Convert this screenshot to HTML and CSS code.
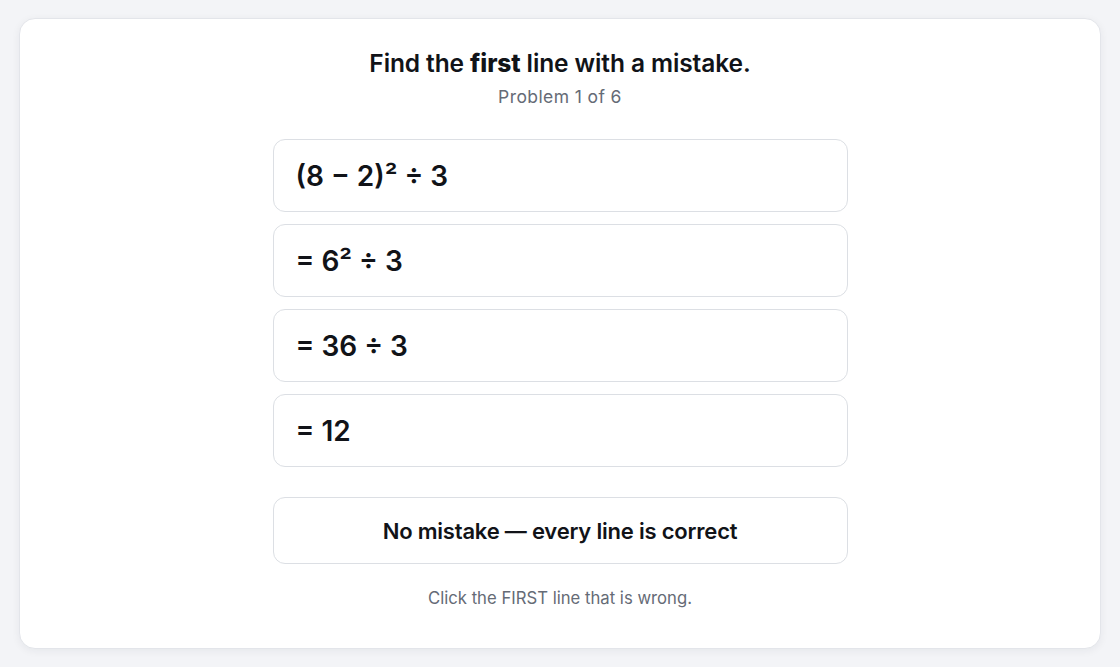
FILE: index.html
```html
<!DOCTYPE html>
<html>
<head>
<meta charset="utf-8">
<link rel="stylesheet" href="styles.css">
</head>
<body>
<div class="card">
  <h1 class="title">Find the <strong>first</strong> line with a mistake.</h1>
  <div class="sub">Problem 1 of 6</div>
  <div class="lines">
    <button class="line">(8 − 2)² ÷ 3</button>
    <button class="line">= 6² ÷ 3</button>
    <button class="line">= 36 ÷ 3</button>
    <button class="line">= 12</button>
  </div>
  <button class="nomistake">No mistake — every line is correct</button>
  <div class="hint">Click the FIRST line that is wrong.</div>
</div>
</body>
</html>
```
FILE: styles.css
```css
html, body { margin: 0; padding: 0; }
body {
  background: #f3f4f7;
  font-family: Inter, "Noto Sans", sans-serif;
  color: #111318;
  padding: 18px 19px;
  box-sizing: border-box;
  height: 667px;
}
.card {
  background: #fff;
  border: 1px solid #e3e5ea;
  border-radius: 16px;
  box-shadow: 0 2px 8px rgba(20, 30, 50, 0.06);
  height: 631px;
  box-sizing: border-box;
  padding: 28px 0 0;
  display: flex;
  flex-direction: column;
  align-items: center;
}
.title {
  margin: 0;
  font-size: 24.5px;
  font-weight: 600;
  line-height: 32px;
  letter-spacing: -0.1px;
}
.title strong { font-weight: 800; }
.sub {
  margin-top: 6px;
  font-size: 17.5px;
  line-height: 24px;
  letter-spacing: 0.4px;
  color: #656b76;
}
.lines {
  margin-top: 30px;
  width: 575px;
  display: flex;
  flex-direction: column;
  gap: 12px;
}
.line, .nomistake {
  font-family: inherit;
  background: #fff;
  border: 1px solid #dcdfe4;
  border-radius: 12px;
  color: #111318;
  box-sizing: border-box;
  cursor: pointer;
}
.line {
  height: 73px;
  text-align: left;
  padding: 0 22px;
  font-size: 28px;
  font-weight: 600;
}
.nomistake {
  margin-top: 30px;
  width: 575px;
  height: 67px;
  font-size: 22px;
  font-weight: 600;
  letter-spacing: -0.2px;
}
.hint {
  margin-top: 22px;
  font-size: 16.7px;
  line-height: 24px;
  color: #656b76;
}
```
